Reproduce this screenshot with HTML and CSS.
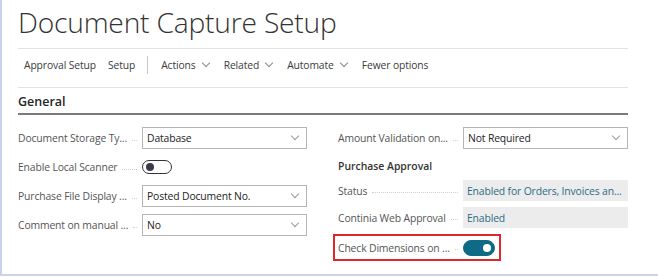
FILE: index.html
```html
<!DOCTYPE html>
<html>

<head>
  <title>Document Capture Setup</title>
  <link rel="stylesheet" href="styles.css">
</head>

<body>
  <div class="frame">
    <h1 class="title">Document Capture Setup</h1>

    <div class="toolbar">
      <span class="action">Approval Setup</span>
      <span class="action">Setup</span>
      <span class="divider"></span>
      <span class="action menu">Actions <i class="chev"></i></span>
      <span class="action menu">Related <i class="chev"></i></span>
      <span class="action menu">Automate <i class="chev"></i></span>
      <span class="action">Fewer options</span>
    </div>

    <h2 class="section">General</h2>

    <div class="fields">
      <div class="column">
        <div class="row">
          <span class="label">Document Storage Ty...</span><span class="dots"></span>
          <div class="input select">Database<i class="chev"></i></div>
        </div>
        <div class="row">
          <span class="label">Enable Local Scanner</span><span class="dots"></span>
          <div class="field-slot"><span class="toggle"></span></div>
        </div>
        <div class="row">
          <span class="label">Purchase File Display ...</span><span class="dots"></span>
          <div class="input select">Posted Document No.<i class="chev"></i></div>
        </div>
        <div class="row">
          <span class="label">Comment on manual ...</span><span class="dots"></span>
          <div class="input select">No<i class="chev"></i></div>
        </div>
      </div>

      <div class="column">
        <div class="row">
          <span class="label">Amount Validation on...</span><span class="dots"></span>
          <div class="input select">Not Required<i class="chev"></i></div>
        </div>
        <div class="group-title">Purchase Approval</div>
        <div class="row short">
          <span class="label">Status</span><span class="dots"></span>
          <div class="input readonly">Enabled for Orders, Invoices an...</div>
        </div>
        <div class="row short">
          <span class="label">Continia Web Approval</span><span class="dots"></span>
          <div class="input readonly">Enabled</div>
        </div>
        <div class="row highlight">
          <span class="label">Check Dimensions on ...</span><span class="dots"></span>
          <div class="field-slot"><span class="toggle on"></span></div>
        </div>
      </div>
    </div>
  </div>
</body>

</html>
```

FILE: styles.css
```css
body {
  margin: 0;
  font-family: "Open Sans", "Noto Sans", sans-serif;
  color: #212121;
  background: #ffffff;
}

.frame {
  width: 652px;
  height: 274px;
  border-left: 2px solid #c9d3ea;
  border-right: 2px solid #c9d3ea;
  border-bottom: 2px solid #c9d3ea;
  padding-left: 16px;
  overflow: hidden;
}

.title {
  margin: 0;
  padding-top: 3px;
  height: 45px;
  font-size: 28.2px;
  font-weight: 300;
  color: #333333;
  letter-spacing: -0.2px;
}

.toolbar {
  width: 610px;
  height: 40px;
  border-top: 1px solid #e3e3e3;
  border-bottom: 1px solid #e3e3e3;
  display: flex;
  align-items: center;
  padding: 0 0 7px 6px;
  box-sizing: border-box;
  font-size: 10.3px;
  letter-spacing: -0.1px;
  color: #3b3b3b;
}

.action {
  margin-right: 12px;
  display: flex;
  align-items: center;
}

.menu {
  margin-right: 15px;
}

.menu .chev {
  margin-left: 7px;
}

.divider {
  width: 1px;
  height: 18px;
  background: #c8c8c8;
  margin: 0 13px 0 0;
}

.chev {
  display: inline-block;
  width: 5px;
  height: 5px;
  border-right: 1px solid #8a8a8a;
  border-bottom: 1px solid #8a8a8a;
  transform: rotate(45deg);
  margin-top: -4px;
}

.section {
  margin: 0;
  width: 610px;
  padding-top: 5px;
  height: 20px;
  border-bottom: 2px solid #7a7a7a;
  font-size: 12.5px;
  font-weight: 600;
  color: #262626;
}

.fields {
  display: grid;
  grid-template-columns: 289px 290px;
  column-gap: 31px;
  padding-top: 12px;
}

.row {
  display: flex;
  align-items: center;
  height: 22px;
  margin-bottom: 7px;
  font-size: 10.4px;
  letter-spacing: -0.15px;
}

.row.short {
  height: 21px;
  margin-bottom: 6px;
}

.label {
  color: #555555;
  white-space: nowrap;
}

.dots {
  flex: 1;
  margin: 4px 5px 0 5px;
  border-bottom: 1px dotted #d0d0d0;
}

.input,
.field-slot {
  width: 165px;
  height: 100%;
  box-sizing: border-box;
  display: flex;
  align-items: center;
  flex-shrink: 0;
}

.input {
  padding-left: 4px;
  white-space: nowrap;
  overflow: hidden;
}

.select {
  border: 1px solid #b5b5b5;
  color: #222222;
}

.select .chev {
  margin-left: auto;
  margin-right: 8px;
  border-color: #9a9a9a;
}

.readonly {
  background: #ececec;
  color: #2a6d86;
}

.group-title {
  font-size: 10.4px;
  font-weight: 600;
  color: #333333;
  height: 20px;
  margin-top: 3px;
  margin-bottom: 4px;
  display: flex;
  align-items: center;
}

.toggle {
  position: relative;
  width: 28px;
  height: 12px;
  border: 1px solid #333333;
  border-radius: 8px;
  box-sizing: content-box;
}

.toggle::after {
  content: "";
  position: absolute;
  left: 3px;
  top: 2px;
  width: 8px;
  height: 8px;
  border-radius: 50%;
  background: #3a3a4a;
}

.toggle.on {
  width: 30px;
  height: 14px;
  background: #0f6b85;
  border-color: #0f6b85;
}

.toggle.on::after {
  left: auto;
  right: 3px;
  top: 3px;
  background: #ffffff;
}

.highlight {
  width: 168px;
  height: 27px;
  margin-left: -5px;
  margin-top: 2px;
  padding-left: 3px;
  border: 2px solid #e0262a;
  box-sizing: border-box;
}

.highlight .field-slot {
  width: 36px;
}
```
